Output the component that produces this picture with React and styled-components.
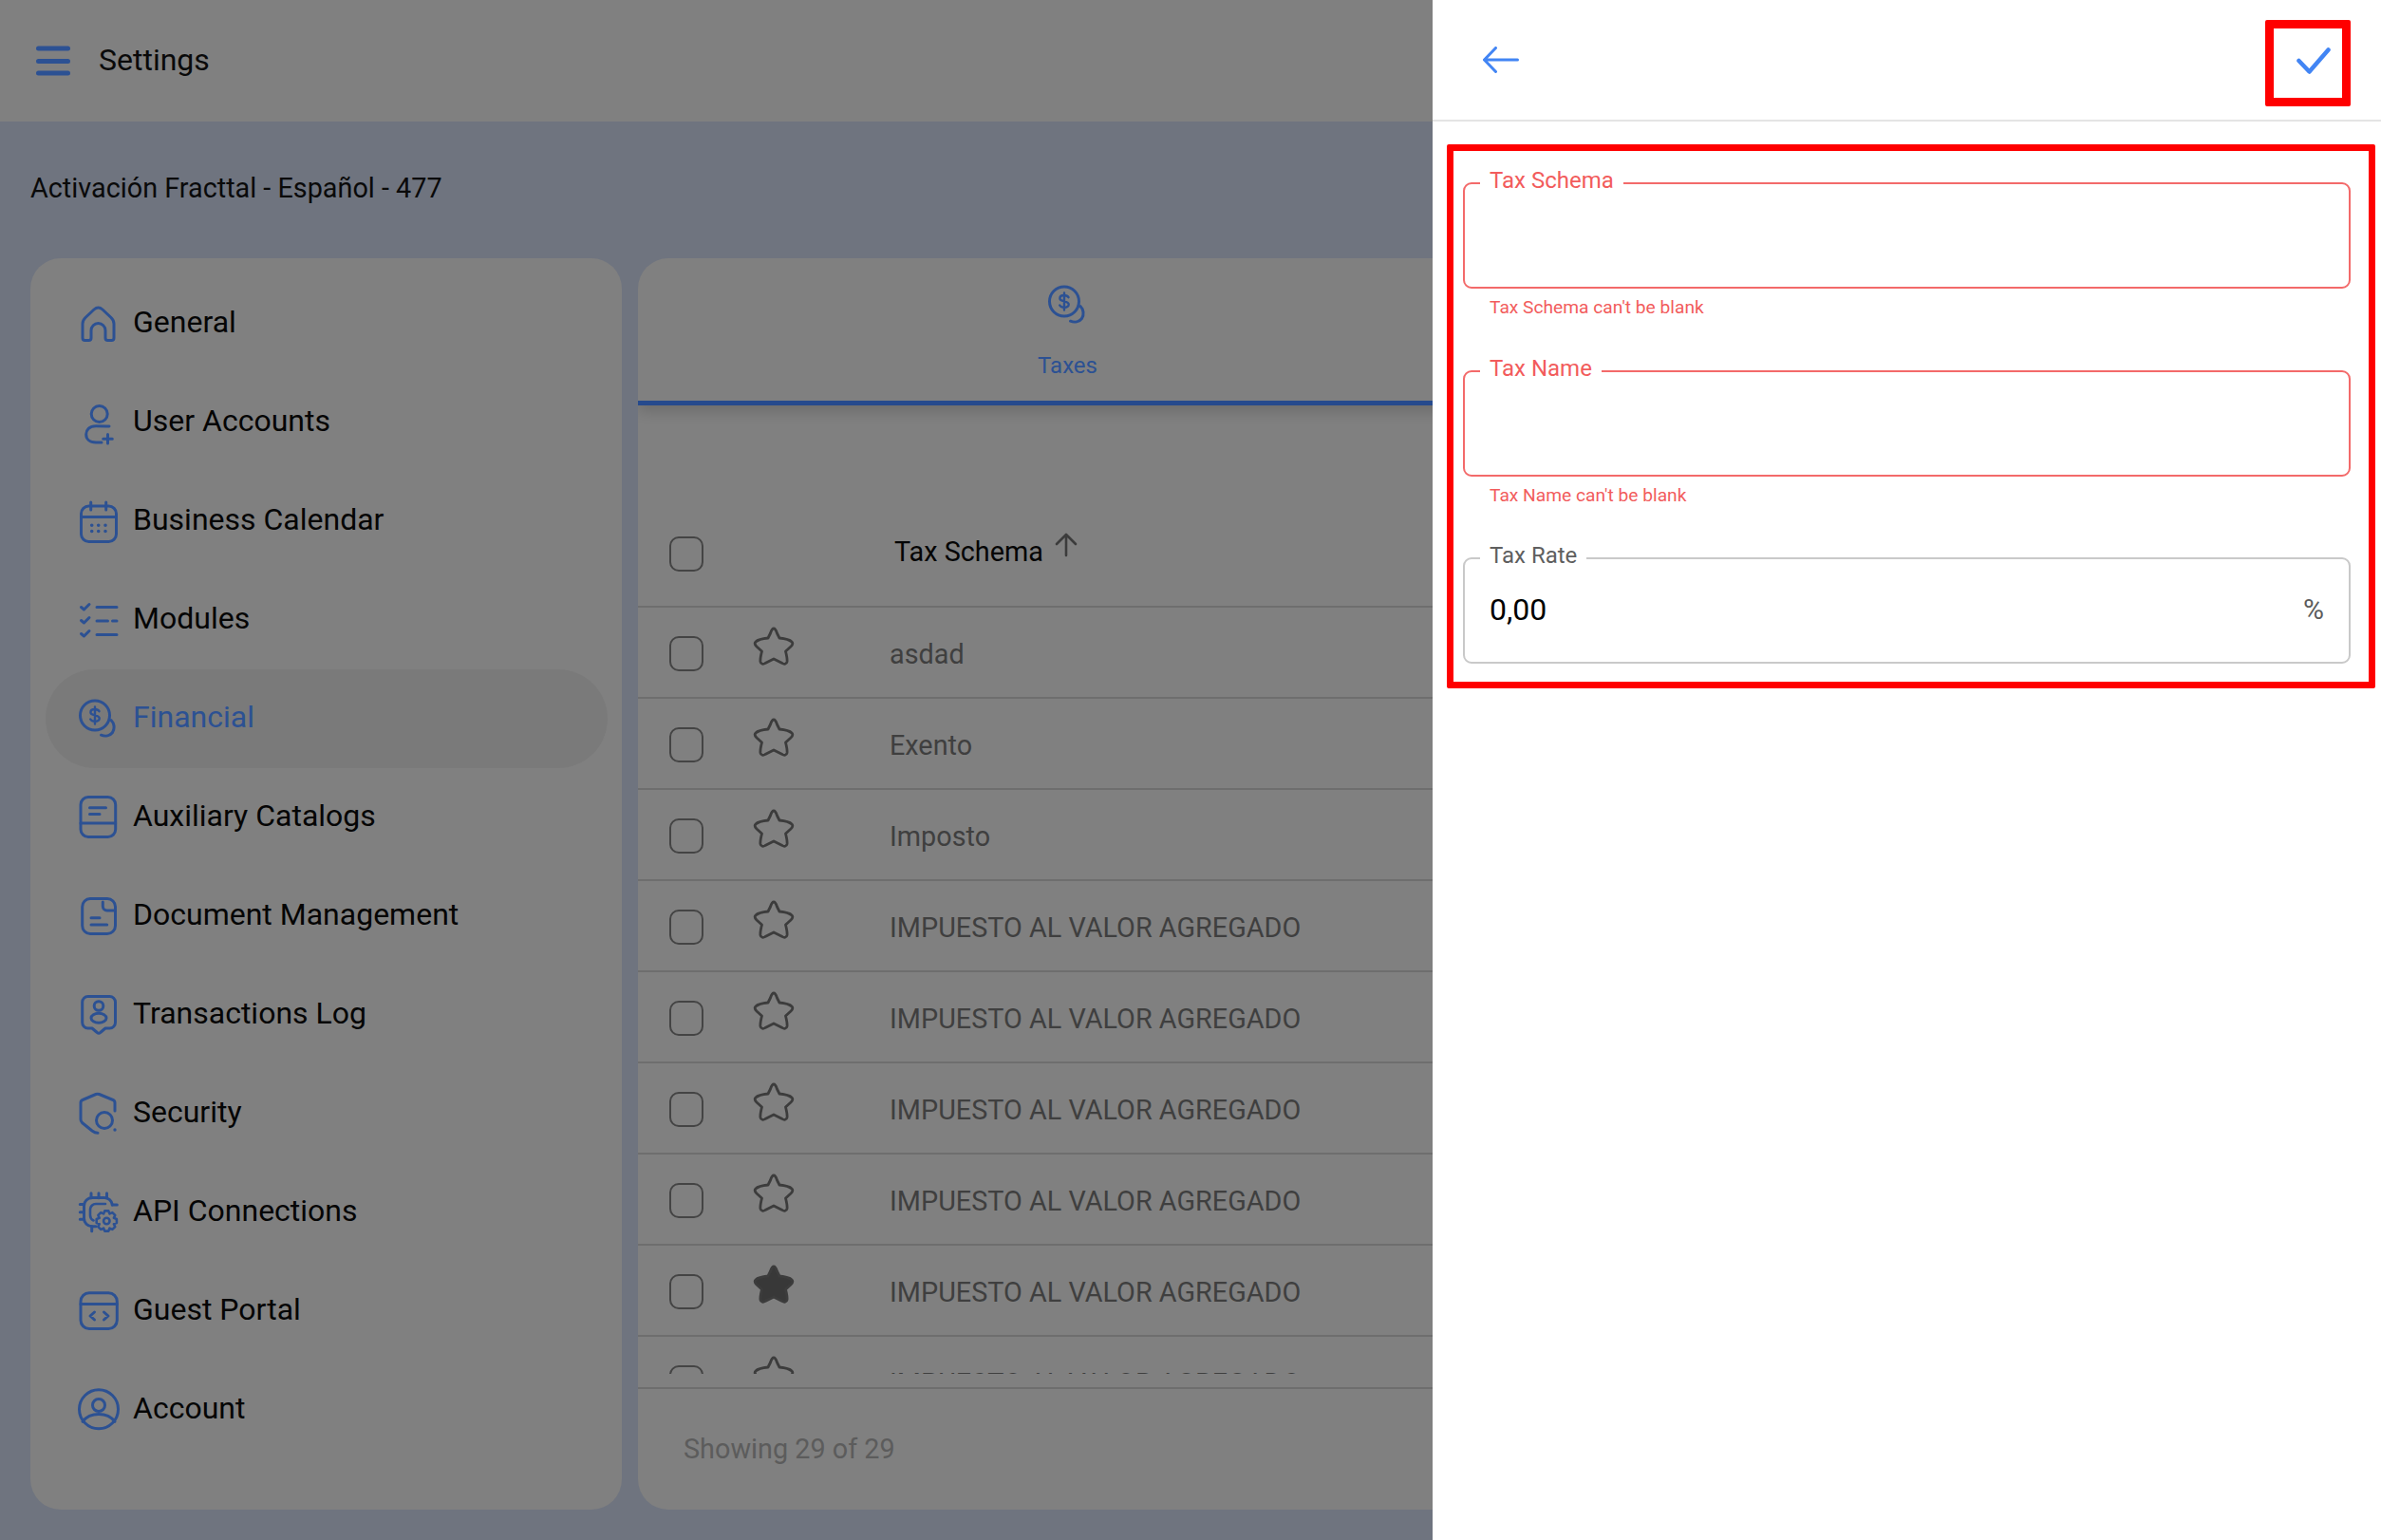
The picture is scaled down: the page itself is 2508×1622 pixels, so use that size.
import React from 'react';
import styled, { createGlobalStyle } from 'styled-components';

const BLUE = '#2c5193';
const ACCENT = '#4285f4';
const ERROR = '#f25c5c';

const GlobalStyle = createGlobalStyle`
	html, body {
		margin: 0;
		height: 100%;
		overflow: hidden;
		background: #6f747f;
		font-family: Roboto, "Liberation Sans", sans-serif;
	}
`;

const Page = styled.div`
	position: relative;
	width: 2508px;
	height: 1622px;
	overflow: hidden;
	background: #6f747f;
`;
const TopBar = styled.header`
	display: flex;
	align-items: center;
	gap: 30px;
	height: 128px;
	padding-left: 38px;
	background: #808080;
	box-sizing: border-box;
`;
const PageTitle = styled.div`
	font-size: 32px;
	color: #0a0a0a;
	margin-bottom: 2px;
`;
const Company = styled.div`
	height: 144px;
	padding-left: 32px;
	box-sizing: border-box;
	font-size: 28.8px;
	line-height: 140px;
	color: #0a0a0a;
`;
const Columns = styled.div`
	display: grid;
	grid-template-columns: 623px 1804px;
	gap: 17px;
	padding-left: 32px;
	height: 1318px;
`;
const Card = styled.section`
	display: flex;
	flex-direction: column;
	background: #808080;
	border-radius: 32px;
	overflow: hidden;
`;
const Menu = styled.nav`
	display: flex;
	flex-direction: column;
	padding: 17px 15px 0 16px;
`;
const MenuItem = styled.div`
	display: flex;
	align-items: center;
	gap: 12px;
	height: 104px;
	padding-left: 32px;
	border-radius: 52px;
	background: ${p => (p.$active ? '#7a7a7a' : 'transparent')};
	color: ${p => (p.$active ? BLUE : '#050505')};
	font-size: 32px;
`;
const MenuLabel = styled.span`
	padding-bottom: 4px;
`;
const IconSvg = styled.svg`
	flex: none;
	width: 48px;
	height: 48px;
	fill: none;
	stroke: ${BLUE};
	stroke-width: 3;
	stroke-linecap: round;
	stroke-linejoin: round;
`;
const TabBar = styled.div`
	height: 155px;
	border-bottom: 5px solid #264a8d;
	box-sizing: border-box;
	box-shadow: 0 6px 14px rgba(0, 0, 0, 0.16);
`;
const Tab = styled.div`
	display: flex;
	flex-direction: column;
	align-items: center;
	width: 905px;
	padding-top: 25px;
	color: ${BLUE};
	font-size: 24px;
`;
const TabLabel = styled.span`
	margin-top: 26px;
`;
const TableHead = styled.div`
	display: flex;
	align-items: center;
	height: 114px;
	margin-top: 99px;
	padding: 3px 0 0 33px;
	border-bottom: 2px solid #6e6e6e;
	box-sizing: border-box;
`;
const HeadLabel = styled.span`
	margin-left: 201px;
	font-size: 28.8px;
	color: #050505;
	padding-bottom: 5px;
`;
const SortIcon = styled.svg`
	width: 28px;
	height: 28px;
	margin: 0 0 20px 10px;
	fill: none;
	stroke: #3c3c3c;
	stroke-width: 2.6;
	stroke-linecap: round;
	stroke-linejoin: round;
`;
const Rows = styled.div`
	height: 807px;
	overflow: hidden;
	flex: none;
`;
const Row = styled.div`
	display: flex;
	align-items: center;
	height: 96px;
	padding: 3px 0 0 33px;
	border-bottom: 2px solid #6e6e6e;
	box-sizing: border-box;
`;
const CheckBox = styled.span`
	flex: none;
	width: 36px;
	height: 37px;
	border: 2.5px solid #444444;
	border-radius: 10px;
	box-sizing: border-box;
`;
const Star = styled.svg`
	flex: none;
	width: 44px;
	height: 44px;
	margin: 0 0 15px 52px;
	fill: ${p => (p.$filled ? '#383838' : 'none')};
	stroke: #3c3c3c;
	stroke-width: 2.8;
	stroke-linejoin: round;
`;
const Cell = styled.span`
	margin-left: 100px;
	font-size: 28.8px;
	color: #3f3f3f;
`;
const TableFoot = styled.div`
	margin-top: 14px;
	height: 129px;
	padding: 0 0 0 48px;
	border-top: 2px solid #6e6e6e;
	box-sizing: border-box;
	font-size: 28.8px;
	line-height: 126px;
	color: #5c5c5c;
`;
const Drawer = styled.aside`
	position: absolute;
	top: 0;
	right: 0;
	bottom: 0;
	width: 999px;
	background: #ffffff;
`;
const DrawerBar = styled.div`
	display: flex;
	align-items: center;
	justify-content: space-between;
	height: 128px;
	padding: 0 53px 0 53px;
	border-bottom: 2px solid #e4e4e4;
	box-sizing: border-box;
`;
const BarIcon = styled.svg`
	margin-top: ${p => p.$drop || 0}px;
	fill: none;
	stroke: ${ACCENT};
	stroke-width: ${p => p.$weight};
	stroke-linecap: round;
	stroke-linejoin: round;
`;
const Form = styled.form`
	display: flex;
	flex-direction: column;
	gap: 41px;
	padding: 51px 32px 0;
`;
const Field = styled.div`
	display: flex;
	flex-direction: column;

	&:last-child {
		margin-top: -1px;
	}
`;
const Frame = styled.fieldset`
	height: 125px;
	min-width: 0;
	margin: 0;
	padding: 0;
	border: 2px solid ${p => (p.$error ? '#f36a6a' : '#c9c9c9')};
	border-radius: 9px;
	box-sizing: border-box;
`;
const FrameLabel = styled.legend`
	margin-left: 16px;
	padding: 0 10px 6px;
	height: 28px;
	box-sizing: border-box;
	font-size: 24px;
	line-height: 22px;
	color: ${p => (p.$error ? ERROR : '#5f5f5f')};
`;
const FrameBody = styled.div`
	display: flex;
	align-items: center;
	justify-content: space-between;
	height: 109px;
	margin-top: -15px;
	padding: 0 26px;
	box-sizing: border-box;
`;
const Value = styled.span`
	font-size: 32px;
	color: #000000;
`;
const Unit = styled.span`
	font-size: 30px;
	color: #5c5c5c;
`;
const ErrorText = styled.div`
	margin: 8px 0 0 28px;
	font-size: 19.2px;
	line-height: 24px;
	color: ${ERROR};
`;
const Highlight = styled.div`
	position: absolute;
	left: ${p => p.$left}px;
	top: ${p => p.$top}px;
	width: ${p => p.$width}px;
	height: ${p => p.$height}px;
	border: ${p => p.$weight}px solid #ff0000;
	border-radius: 2px;
	box-sizing: border-box;
	pointer-events: none;
`;

const Coins = () => (
	<>
		<circle cx="20" cy="20.5" r="15.5" />
		<path d="M37 25.5a10.5 10.5 0 0 1 1.5 13c-2.7 3.6-7.700 4.400-12 2.700" />
		<path d="M24.500 16.200c-.8-1.400-2.500-2.200-4.500-2.200-2.600 0-4.600 1.300-4.600 3.200 0 4.300 9.300 2.100 9.300 6.400 0 1.900-2 3.200-4.700 3.200-2.100 0-3.900-.8-4.800-2.300M20 11.500v18" strokeWidth="2.400" />
	</>
);

const gearPath = (cx, cy, outer, inner, teeth) => {
	const step = (Math.PI * 2) / teeth;
	const point = (r, a) => `${(cx + r * Math.cos(a)).toFixed(2)} ${(cy + r * Math.sin(a)).toFixed(2)}`;
	let d = '';
	for (let i = 0; i < teeth; i += 1) {
		const a = i * step;
		d += `${i === 0 ? 'M' : 'L'}${point(inner, a - step * 0.5)} L${point(outer, a - step * 0.24)} L${point(outer, a + step * 0.24)} `;
	}
	return `${d}Z`;
};

const icons = {
	general: <path d="M7 24C7 21 8 19.500 10 17.500L19 9Q23.500 5 28 9L37 17.500C39 19.500 40 21 40 24V39Q40 41.500 37.500 41.500H33.500Q31 41.500 31 39V31A7.500 7.500 0 0 0 16 31V39Q16 41.500 13.500 41.500H9.500Q7 41.500 7 39Z" />,
	users: (
		<>
			<circle cx="24.700" cy="15" r="8.500" />
			<path d="M35 28 Q30 27.700 21 27.700 C14 27.700 10.700 32 10.700 36.500 C10.700 41 14 45 21 45 H27" />
			<path d="M33.500 36.500v9.500M28.700 41.200h9.600" />
		</>
	),
	calendar: (
		<>
			<rect x="5.500" y="8" width="37" height="37.500" rx="8" />
			<path d="M15.700 4v8M31.700 4v8M5.500 19.500h37" />
			<path d="M16.700 28.300h.01M23.700 28.300h.01M31 28.300h.01M16.700 34.500h.01M23.700 34.500h.01M31 34.500h.01" strokeWidth="3.600" />
		</>
	),
	modules: (
		<path d="M5.500 10.500l3 2.500 5.500-5.500M5.500 24.500l3 2.500 5.500-5.500M5.500 38.500l3 2.500 5.500-5.500M22 10.500h21M22 25h11.500M38.500 25h4.500M22 39.500h21" />
	),
	financial: <Coins />,
	catalogs: (
		<>
			<rect x="5" y="2.500" width="36.700" height="42" rx="8" />
			<path d="M5 30h36.700M14.500 13.700h17M14.500 20.500h10.500" />
		</>
	),
	documents: (
		<>
			<path d="M15 5.500H33a8.500 8.500 0 0 1 8.500 8.500V34a8.500 8.500 0 0 1-8.500 8.500H15A8.500 8.500 0 0 1 6.700 34V14A8.500 8.500 0 0 1 15 5.500Z" />
			<path d="M28.300 9v4.500a4.500 4.500 0 0 0 4.500 4.500h8.500M16 25.700h9M16 33h16.700" />
		</>
	),
	transactions: (
		<>
			<path d="M13 4.500H35.500a6 6 0 0 1 6 6V32a6 6 0 0 1-6 6H31l-5.300 4.500a2.500 2.500 0 0 1-3.400 0L17 38h-4.300a6 6 0 0 1-6-6V10.500a6 6 0 0 1 6-6Z" />
			<circle cx="24" cy="14.500" r="4.800" />
			<ellipse cx="24" cy="27.300" rx="8" ry="5" />
		</>
	),
	security: (
		<>
			<path d="M41 21V12.500Q41 10.300 39 9.500L24.500 3.500Q22.700 2.800 21 3.500L7 9.500Q5 10.300 5 12.500V30Q5 32 6.500 33.500L17 42Q20 44.300 23 44.300" />
			<circle cx="30" cy="31" r="8.500" />
			<path d="M41 41h.01" strokeWidth="3.400" />
		</>
	),
	api: (
		<>
			<path d="M21 38.700H17a8.500 8.500 0 0 1-8.500-8.500V17a8.500 8.500 0 0 1 8.500-8.500H30a8.500 8.500 0 0 1 8.300 7.500" />
			<path d="M31 15H21a6 6 0 0 0-6 6V27a6 6 0 0 0 3.500 5.500" strokeWidth="2.600" />
			<path d="M16 3.700v5M24 3.700v5M32.500 3.700v5M4.300 15.500h4M4.300 23.700h4M4.300 31.200h4M38.300 16h5M16.700 38.700v5" />
			<path d={gearPath(32.300, 33, 10.800, 8.200, 8)} strokeWidth="2.600" />
			<circle cx="32.300" cy="33" r="3.200" strokeWidth="2.600" />
		</>
	),
	portal: (
		<>
			<rect x="5" y="4.700" width="38.300" height="37.800" rx="9" />
			<path d="M5 16.500h38.300M19.500 25l-4.500 4 4.500 4M29.500 25l4.500 4-4.500 4" />
		</>
	),
	account: (
		<>
			<circle cx="24" cy="23.300" r="20.500" />
			<circle cx="24" cy="19" r="6.500" />
			<path d="M7 36.300C11 31 17 28.500 24 28.500S37 31 41 36.300" />
		</>
	),
};

const menu = [
	['general', 'General'],
	['users', 'User Accounts'],
	['calendar', 'Business Calendar'],
	['modules', 'Modules'],
	['financial', 'Financial'],
	['catalogs', 'Auxiliary Catalogs'],
	['documents', 'Document Management'],
	['transactions', 'Transactions Log'],
	['security', 'Security'],
	['api', 'API Connections'],
	['portal', 'Guest Portal'],
	['account', 'Account'],
];

const VAT = 'IMPUESTO AL VALOR AGREGADO';
const taxes = [
	{ name: 'asdad' },
	{ name: 'Exento' },
	{ name: 'Imposto' },
	{ name: VAT },
	{ name: VAT },
	{ name: VAT },
	{ name: VAT },
	{ name: VAT, favorite: true },
	{ name: VAT },
];

const STAR = 'M22 3C23.500 3 24.500 5 25.500 8L28 13C33 13.500 39 15 41 17C42.500 18.500 42 20 40 22L34.500 27C35.500 31 36.500 35 36 38C35.500 40.500 33 41 31 39.500L22 35L13 39.500C11 41 8.500 40.500 8 38C7.500 35 8.500 31 9.500 27L4 22C2 20 1.500 18.500 3 17C5 15 11 13.500 16 13L18.500 8C19.500 5 20.500 3 22 3Z';

const TextField = ({ label, error, children }) => (
	<Field>
		<Frame $error={!!error}>
			<FrameLabel $error={!!error}>{label}</FrameLabel>
			<FrameBody>{children}</FrameBody>
		</Frame>
		{error && <ErrorText>{error}</ErrorText>}
	</Field>
);

const App = () => (
	<Page>
		<GlobalStyle />
		<TopBar>
			<svg width="36" height="32" viewBox="0 0 36 32" fill="none" stroke={BLUE} strokeWidth="5" strokeLinecap="round">
				<path d="M2.500 3h31M2.500 16.500h31M2.500 29h31" />
			</svg>
			<PageTitle>Settings</PageTitle>
		</TopBar>
		<Company>Activación Fracttal - Español - 477</Company>
		<Columns>
			<Card>
				<Menu>
					{menu.map(([icon, label]) => (
						<MenuItem key={icon} $active={icon === 'financial'}>
							<IconSvg viewBox="0 0 48 48">{icons[icon]}</IconSvg>
							<MenuLabel>{label}</MenuLabel>
						</MenuItem>
					))}
				</Menu>
			</Card>
			<Card>
				<TabBar>
					<Tab>
						<IconSvg viewBox="0 0 48 48"><Coins /></IconSvg>
						<TabLabel>Taxes</TabLabel>
					</Tab>
				</TabBar>
				<TableHead>
					<CheckBox />
					<HeadLabel>Tax Schema</HeadLabel>
					<SortIcon viewBox="0 0 28 28"><path d="M14 25V3M4 13L14 3l10 10" /></SortIcon>
				</TableHead>
				<Rows>
					{taxes.map((tax, i) => (
						<Row key={`${tax.name}-${i}`}>
							<CheckBox />
							<Star viewBox="0 0 44 44" $filled={tax.favorite}><path d={STAR} /></Star>
							<Cell>{tax.name}</Cell>
						</Row>
					))}
				</Rows>
				<TableFoot>Showing 29 of 29</TableFoot>
			</Card>
		</Columns>
		<Drawer>
			<DrawerBar>
				<BarIcon width="38" height="28" viewBox="0 0 38 28" $weight="3">
					<path d="M13.500 1.500L1.500 14l12 12.500M1.500 14H36.500" />
				</BarIcon>
				<BarIcon width="36" height="28" viewBox="0 0 36 28" $weight="4.500" $drop={2}>
					<path d="M2.500 14l11 11.500L33.500 2.500" />
				</BarIcon>
			</DrawerBar>
			<Form>
				<TextField label="Tax Schema" error="Tax Schema can't be blank" />
				<TextField label="Tax Name" error="Tax Name can't be blank" />
				<TextField label="Tax Rate">
					<Value>0,00</Value>
					<Unit>%</Unit>
				</TextField>
			</Form>
			<Highlight $left={877} $top={21} $width={90} $height={91} $weight={9} />
			<Highlight $left={15} $top={152} $width={978} $height={573} $weight={7} />
		</Drawer>
	</Page>
);

export default App;
